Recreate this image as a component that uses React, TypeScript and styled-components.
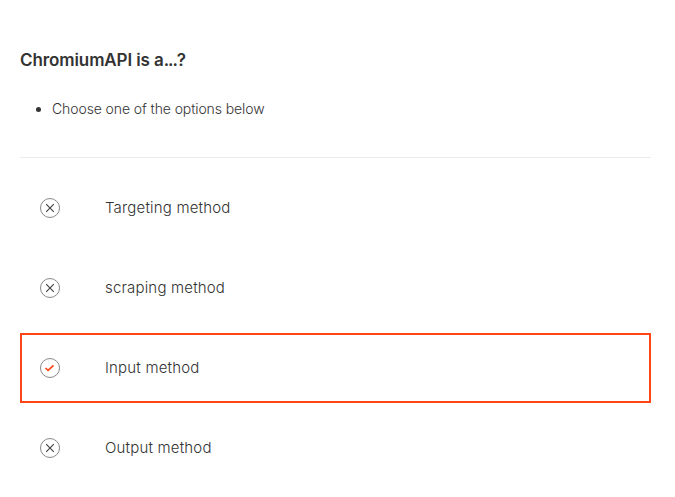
import React from "react";
import styled, { createGlobalStyle } from "styled-components";

const GlobalStyle = createGlobalStyle`
  * { box-sizing: border-box; }
  body { margin: 0; background: #fff; color: #333; font-family: Inter, sans-serif; }
`;

const Page = styled.main`
  height: 497px;
  overflow: hidden;
  padding: 48px 24px 0 20px;
`;

const Title = styled.h1`
  margin: 0;
  font-size: 17px;
  line-height: 24px;
  font-weight: 600;
  letter-spacing: -0.1px;
`;

const Ellipsis = styled.span`
  letter-spacing: -1.05px;
`;

const Hints = styled.ul`
  margin: 25px 0 0;
  padding: 0 0 0 32px;
  font-size: 14px;
  font-weight: 300;
  line-height: 24px;
  letter-spacing: -0.1px;
`;

const Divider = styled.hr`
  margin: 36px 0 15px;
  border: 0;
  height: 1px;
  background: #ebebeb;
`;

const Options = styled.div`
  display: flex;
  flex-direction: column;
  gap: 10px;
`;

const Option = styled.div<{ $selected?: boolean }>`
  display: flex;
  align-items: center;
  gap: 45px;
  height: 70px;
  padding: 0 18px;
  border: 2px solid ${(p) => (p.$selected ? "#fc4619" : "transparent")};
`;

const Label = styled.span`
  padding-bottom: 2px;
  font-size: 15px;
  font-weight: 300;
  letter-spacing: 0.18px;
`;

const Mark = styled.svg`
  width: 20px;
  height: 20px;
  flex: none;
  fill: none;
`;

const options = [
  { label: "Targeting method", correct: false },
  { label: "scraping method", correct: false },
  { label: "Input method", correct: true },
  { label: "Output method", correct: false },
];

export default function App() {
  return (
    <Page>
      <GlobalStyle />
      <Title>
        ChromiumAPI is a<Ellipsis>...</Ellipsis>?
      </Title>
      <Hints>
        <li>Choose one of the options below</li>
      </Hints>
      <Divider />
      <Options>
        {options.map(({ label, correct }) => (
          <Option key={label} $selected={correct}>
            <Mark viewBox="0 0 20 20">
              <circle cx="10" cy="10" r="9.5" stroke="#888" />
              {correct ? (
                <path d="M5.5 10 8.1 12.4 13.5 7.3" stroke="#fc4619" strokeWidth="1.7" />
              ) : (
                <path d="m6.2 6.2 7.6 7.6m0-7.6-7.6 7.6" stroke="#444" strokeWidth="1.2" />
              )}
            </Mark>
            <Label>{label}</Label>
          </Option>
        ))}
      </Options>
    </Page>
  );
}
